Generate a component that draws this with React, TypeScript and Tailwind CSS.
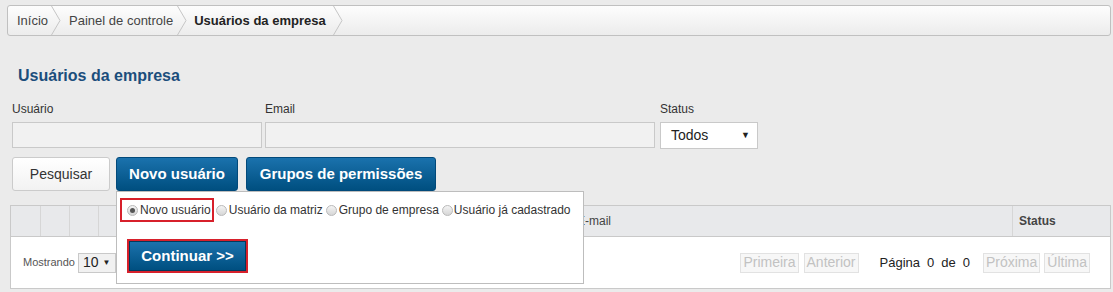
import React from "react";

function Chevron() {
  return (
    <svg width="10" height="29" viewBox="0 0 10 29" className="shrink-0">
      <polyline points="0.5,0 9,14.5 0.5,29" fill="none" stroke="#c6c6c6" strokeWidth="1" />
    </svg>
  );
}

function Radio({ checked }: { checked?: boolean }) {
  return (
    <span className="inline-flex h-[11px] w-[11px] shrink-0 items-center justify-center rounded-full border border-[#b9b9b9] bg-linear-to-b from-[#f4f4f4] to-[#d6d6d6]">
      {checked && <span className="h-[5px] w-[5px] rounded-full bg-[#555]" />}
    </span>
  );
}

function PageBtn({ label }: { label: string }) {
  return (
    <span className="flex h-[20px] items-center border border-[#e2e2e2] bg-[#f7f7f7] px-[2px] text-[14px] text-[#c2c2c2]">
      {label}
    </span>
  );
}

export default function App() {
  return (
    <div className="h-[292px] w-[1113px] overflow-hidden bg-[#ebebeb] text-[#333] [font-family:'Liberation_Sans',Arial,sans-serif]">
      {/* breadcrumb */}
      <div className="pl-[7px] pr-[2px] pt-[5px]">
        <nav className="flex h-[31px] items-center rounded-[3px] border border-[#c0c0c0] bg-linear-to-b from-[#fdfdfd] to-[#ececec] pl-[9px] text-[13px]">
          <span className="text-[#444]">Início</span>
          <span className="ml-[3px] mr-[8px] flex"><Chevron /></span>
          <span className="text-[#444]">Painel de controle</span>
          <span className="ml-[4px] mr-[7px] flex"><Chevron /></span>
          <span className="font-bold text-[#222]">Usuários da empresa</span>
          <span className="ml-[7px] flex"><Chevron /></span>
        </nav>
      </div>

      <h1 className="mt-[30px] pl-[18px] text-[16px] font-bold leading-[20px] text-[#1b4e7c]">
        Usuários da empresa
      </h1>

      {/* filters */}
      <div className="mt-[16px] flex pl-[12px] text-[12px]">
        <div className="mr-[3px] w-[250px]">
          <div className="h-[14px] leading-[14px]">Usuário</div>
          <div className="mt-[6px] h-[26px] border border-[#c9c9c9] bg-[#f1f1f1]" />
        </div>
        <div className="mr-[5px] w-[390px]">
          <div className="h-[14px] leading-[14px]">Email</div>
          <div className="mt-[6px] h-[26px] border border-[#c9c9c9] bg-[#f1f1f1]" />
        </div>
        <div className="w-[98px]">
          <div className="h-[14px] leading-[14px]">Status</div>
          <div className="mt-[6px] flex h-[27px] items-center justify-between border border-[#c9c9c9] bg-white pl-[10px] pr-[7px] text-[14px] text-[#222]">
            <span>Todos</span>
            <span className="text-[9px]">▼</span>
          </div>
        </div>
      </div>

      {/* buttons */}
      <div className="mt-[8px] flex pl-[12px]">
        <button className="flex h-[34px] w-[98px] items-center justify-center rounded-[3px] border border-[#cbcbcb] bg-linear-to-b from-[#ffffff] to-[#f2f2f2] text-[14px] text-[#333]">
          Pesquisar
        </button>
        <div className="relative ml-[6px] w-[122px]">
          <button className="flex h-[34px] w-full items-center justify-center rounded-[3px] border border-[#01497a] bg-linear-to-b from-[#1a72ad] to-[#004f80] text-[15px] font-bold text-white">
            Novo usuário
          </button>
          <div className="absolute left-0 top-full z-10 h-[93px] w-[468px] border border-[#bdbdbd] bg-white">
            <div className="ml-[3px] mt-[6px] flex items-center text-[12px] text-[#333]">
              <span className="flex h-[24px] items-center gap-[2px] border-2 border-[#d7202b] pl-[5px] pr-[1px]">
                <Radio checked />
                <span>Novo usuário</span>
              </span>
              <span className="ml-[2px] flex items-center gap-[2px]">
                <Radio />
                <span>Usuário da matriz</span>
              </span>
              <span className="ml-[3px] flex items-center gap-[2px]">
                <Radio />
                <span>Grupo de empresa</span>
              </span>
              <span className="ml-[3px] flex items-center gap-[1px]">
                <Radio />
                <span>Usuário já cadastrado</span>
              </span>
            </div>
            <div className="ml-[10px] mt-[17px] inline-flex border-2 border-[#d7202b]">
              <button className="flex h-[30px] w-[117px] items-center justify-center border border-[#03395c] bg-linear-to-b from-[#1a72ad] to-[#004f80] text-[15px] font-bold text-white">
                Continuar &gt;&gt;
              </button>
            </div>
          </div>
        </div>
        <button className="ml-[8px] flex h-[34px] w-[190px] items-center justify-center rounded-[3px] border border-[#01497a] bg-linear-to-b from-[#1a72ad] to-[#004f80] text-[15px] font-bold text-white">
          Grupos de permissões
        </button>
      </div>

      {/* table */}
      <div className="ml-[10px] mr-[2px] mt-[14px] border border-[#c9c9c9]">
        <div className="flex h-[31px] border-b border-[#c9c9c9] bg-[#e8e9eb] text-[12px] text-[#444]">
          <div className="w-[30px] border-r border-[#d6d6d6]" />
          <div className="w-[29px] border-r border-[#d6d6d6]" />
          <div className="w-[29px] border-r border-[#d6d6d6]" />
          <div className="w-[29px] border-r border-[#d6d6d6]" />
          <div className="w-[443px] border-r border-[#d6d6d6]" />
          <div className="flex flex-1 items-center border-r border-[#d6d6d6] pl-[6px]">E-mail</div>
          <div className="flex w-[97px] items-center pl-[6px] font-bold">Status</div>
        </div>
        <div className="flex h-[51px] items-center justify-between bg-white pl-[12px] pr-[20px]">
          <div className="flex items-center">
            <span className="text-[11px] text-[#555]">Mostrando</span>
            <span className="ml-[3px] flex h-[20px] w-[38px] items-center border border-[#c9c9c9] bg-[#f1f1f1] pl-[4px] text-[14px] text-[#222]">
              10 <span className="ml-[4px] text-[8px]">▼</span>
            </span>
          </div>
          <div className="flex items-center">
            <span className="mr-[1px]"><PageBtn label="Primeira" /></span>
            <span className="ml-[4px]"><PageBtn label="Anterior" /></span>
            <span className="ml-[21px] flex gap-[7px] text-[13px] text-[#222]">
              <span>Página</span>
              <span>0</span>
              <span>de</span>
              <span>0</span>
            </span>
            <span className="ml-[13px]"><PageBtn label="Próxima" /></span>
            <span className="ml-[4px]"><PageBtn label="Última" /></span>
          </div>
        </div>
      </div>
    </div>
  );
}
